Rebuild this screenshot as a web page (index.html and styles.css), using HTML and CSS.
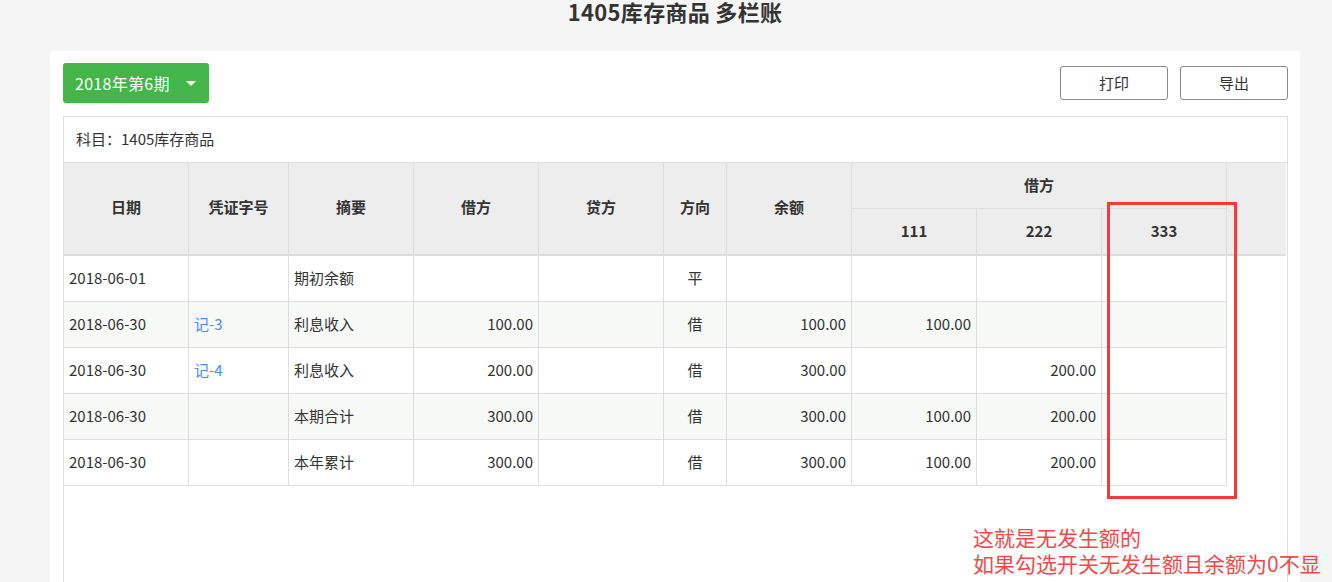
FILE: index.html
```html
<!DOCTYPE html>
<html lang="zh-CN">
<head>
<meta charset="utf-8">
<title>1405库存商品 多栏账</title>
<link rel="stylesheet" href="styles.css">
</head>
<body>
<div class="page">
  <h1 class="title">1405库存商品 多栏账</h1>
  <div class="panel">
    <div class="toolbar">
      <button class="period">2018年第6期<span class="caret"></span></button>
      <div class="actions">
        <button class="btn">打印</button>
        <button class="btn">导出</button>
      </div>
    </div>
    <div class="ledger">
      <div class="subject">科目：1405库存商品</div>
      <div class="head-wrap">
        <table class="grid head">
          <colgroup>
            <col class="w125"><col class="w100"><col class="w125"><col class="w125"><col class="w125"><col class="w63"><col class="w125"><col class="w125"><col class="w125"><col class="w125">
          </colgroup>
          <tr>
            <th rowspan="2" class="nb">日期</th>
            <th rowspan="2" class="nb">凭证字号</th>
            <th rowspan="2" class="nb">摘要</th>
            <th rowspan="2" class="nb">借方</th>
            <th rowspan="2" class="nb">贷方</th>
            <th rowspan="2" class="nb">方向</th>
            <th rowspan="2" class="nb">余额</th>
            <th colspan="3">借方</th>
          </tr>
          <tr>
            <th class="nb">111</th>
            <th class="nb">222</th>
            <th class="nb">333</th>
          </tr>
        </table>
      </div>
      <table class="grid body">
        <colgroup>
          <col class="w125"><col class="w100"><col class="w125"><col class="w125"><col class="w125"><col class="w63"><col class="w125"><col class="w125"><col class="w125"><col class="w125">
        </colgroup>
        <tr>
          <td>2018-06-01</td><td></td><td>期初余额</td><td class="num"></td><td class="num"></td><td class="dir">平</td><td class="num"></td><td class="num"></td><td class="num"></td><td class="num"></td>
        </tr>
        <tr class="alt">
          <td>2018-06-30</td><td><a class="link">记-3</a></td><td>利息收入</td><td class="num">100.00</td><td class="num"></td><td class="dir">借</td><td class="num">100.00</td><td class="num">100.00</td><td class="num"></td><td class="num"></td>
        </tr>
        <tr>
          <td>2018-06-30</td><td><a class="link">记-4</a></td><td>利息收入</td><td class="num">200.00</td><td class="num"></td><td class="dir">借</td><td class="num">300.00</td><td class="num"></td><td class="num">200.00</td><td class="num"></td>
        </tr>
        <tr class="alt">
          <td>2018-06-30</td><td></td><td>本期合计</td><td class="num">300.00</td><td class="num"></td><td class="dir">借</td><td class="num">300.00</td><td class="num">100.00</td><td class="num">200.00</td><td class="num"></td>
        </tr>
        <tr>
          <td>2018-06-30</td><td></td><td>本年累计</td><td class="num">300.00</td><td class="num"></td><td class="dir">借</td><td class="num">300.00</td><td class="num">100.00</td><td class="num">200.00</td><td class="num"></td>
        </tr>
      </table>
    </div>
  </div>
</div>
<div class="mark-box"></div>
<div class="mark-note">这就是无发生额的<br>如果勾选开关无发生额且余额为0不显</div>
</body>
</html>
```

FILE: styles.css
```css
html, body {
  margin: 0;
  padding: 0;
  background: #f5f5f5;
  font-family: "Noto Sans CJK SC", "Noto Sans", sans-serif;
  color: #333;
  overflow: hidden;
}

.page {
  width: 1250px;
  margin-left: 50px;
}

.title {
  margin: 0;
  font-size: 22px;
  line-height: 22px;
  font-weight: bold;
  text-align: center;
  color: #333;
  letter-spacing: 0.3px;
}

.panel {
  margin-top: 29px;
  background: #fff;
  padding: 12px 12px 0 13px;
  height: 519px;
  overflow: hidden;
}

.toolbar {
  display: flex;
  justify-content: space-between;
  align-items: center;
  height: 40px;
}

.period {
  display: flex;
  align-items: center;
  height: 40px;
  width: 146px;
  padding: 0 0 0 12px;
  border: none;
  border-radius: 3px;
  background: #44b549;
  color: #fff;
  font-family: inherit;
  font-size: 16px;
  letter-spacing: 0.3px;
  cursor: pointer;
}

.caret {
  width: 0;
  height: 0;
  margin-left: 16px;
  border-left: 5px solid transparent;
  border-right: 5px solid transparent;
  border-top: 5px solid #fff;
}

.actions {
  display: flex;
  gap: 12px;
}

.btn {
  width: 108px;
  height: 34px;
  border: 1px solid #888;
  border-radius: 3px;
  background: #fff;
  color: #333;
  font-family: inherit;
  font-size: 15px;
  padding: 0 0 1px;
  cursor: pointer;
}

.ledger {
  margin-top: 13px;
  border: 1px solid #ddd;
  height: 500px;
}

.subject {
  height: 44px;
  line-height: 43px;
  padding: 0 0 1px 12px;
  font-size: 15px;
  border-bottom: 1px solid #ddd;
}

.head-wrap {
  background: #ededed;
  border-bottom: 2px solid #ddd;
  margin-right: 1px;
}

.grid {
  border-collapse: separate;
  border-spacing: 0;
  table-layout: fixed;
  width: 1163px;
  font-size: 15px;
}

.w125 { width: 125px; }
.w100 { width: 100px; }
.w63 { width: 63px; }

.grid th {
  height: 45px;
  padding: 0 0 2px;
  font-weight: bold;
  text-align: center;
  border-right: 1px solid #ddd;
  border-bottom: 1px solid #ddd;
  box-sizing: border-box;
}

.grid th.nb {
  border-bottom: none;
}

.grid.head tr:first-child th {
  height: 46px;
}

.grid.head th[rowspan] {
  height: 91px;
  padding-bottom: 4px;
}

.grid td {
  height: 46px;
  box-sizing: border-box;
  padding: 0 5px 2px;
  border-right: 1px solid #ddd;
  border-bottom: 1px solid #ddd;
  white-space: nowrap;
  vertical-align: middle;
}

.grid tr.alt td {
  background: #f7f9f6;
}

.grid td.num {
  text-align: right;
}

.grid td.dir {
  text-align: center;
}

.link {
  color: #4a8df0;
  text-decoration: none;
}

.mark-box {
  position: absolute;
  left: 1107px;
  top: 202px;
  width: 130px;
  height: 297px;
  box-sizing: border-box;
  border: 3px solid #f53a3a;
}

.mark-note {
  position: absolute;
  left: 973px;
  top: 524px;
  font-size: 21px;
  line-height: 26px;
  color: #f54848;
  white-space: nowrap;
}
```
